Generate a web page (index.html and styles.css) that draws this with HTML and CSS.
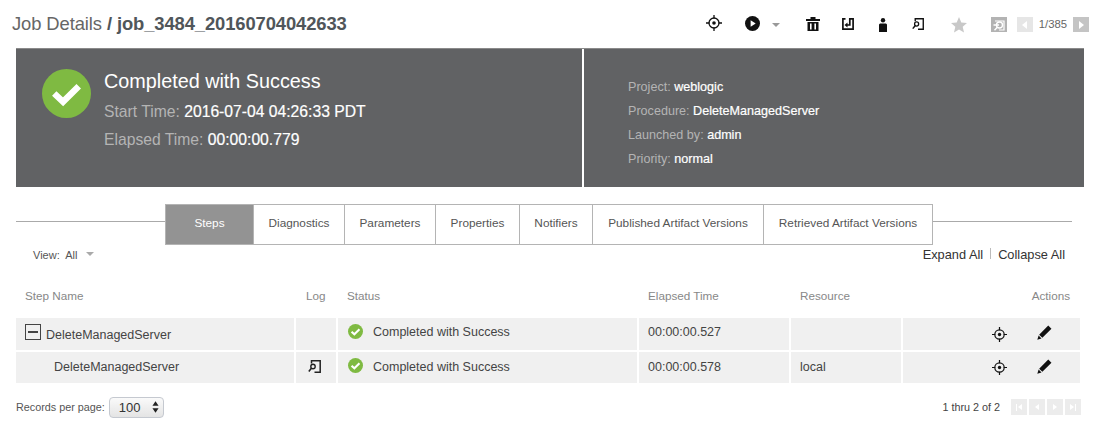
FILE: index.html
```html
<!DOCTYPE html>
<html lang="en">
<head>
<meta charset="utf-8">
<title>Job Details</title>
<link rel="stylesheet" href="styles.css">
</head>
<body>
<svg class="defs" width="0" height="0" aria-hidden="true">
  <defs>
    <symbol id="target" viewBox="0 0 16 16">
      <circle cx="8" cy="8" r="5" fill="none" stroke="currentColor" stroke-width="1.3"/>
      <circle cx="8" cy="8" r="1.8" fill="currentColor"/>
      <path d="M8 0v3.5M8 12.5V16M0 8h3.5M12.5 8H16" stroke="currentColor" stroke-width="1.3" fill="none"/>
    </symbol>
    <symbol id="logfile" viewBox="0 0 13 13">
      <path d="M3.500 3.500V.8h8.700v11.400H6.500" fill="none" stroke="currentColor" stroke-width="1.500"/>
      <circle cx="5" cy="6.500" r="2.200" fill="none" stroke="currentColor" stroke-width="1.400"/>
      <path d="M3.400 8.300.8 11.500" stroke="currentColor" stroke-width="1.600"/>
    </symbol>
    <symbol id="pencil" viewBox="0 0 14 14">
      <path d="M10.500.5 13.500 3.500 5 12 2 9zM1.500 9.800l2.700 2.700L.3 13.700z" fill="currentColor"/>
    </symbol>
    <symbol id="ok" viewBox="0 0 16 16">
      <circle cx="8" cy="8" r="8" fill="#7fba42"/>
      <path d="M3.800 8.200 6.800 11 12.200 5.600" fill="none" stroke="#fff" stroke-width="2.200"/>
    </symbol>
  </defs>
</svg>

<header class="topbar">
  <h1 class="title">Job Details <b>/ job_3484_20160704042633</b></h1>
  <div class="tools">
    <svg class="ic ic-target"><use href="#target"/></svg>
    <svg class="ic ic-play" viewBox="0 0 16 16"><circle cx="8" cy="8" r="8" fill="#111"/><path d="M6 4.600 11.400 8 6 11.400z" fill="#fff"/></svg>
    <span class="caret caret-top"></span>
    <svg class="ic ic-trash" viewBox="0 0 14 14"><path d="M4.500 0h5v2H14v2H0V2h4.500zM1.500 5h11v9h-11zM4 6.500V12.500h1.600V6.500zM8.400 6.500V12.500H10V6.500z" fill="#111" fill-rule="evenodd"/></svg>
    <svg class="ic ic-move" viewBox="0 0 12 12"><path d="M3.500.9H.9v10.200h10.200V.9H7.800V7H4.500" fill="none" stroke="#111" stroke-width="1.700"/><path d="M5.500 4.500v5L2.500 7z" fill="#111"/></svg>
    <svg class="ic ic-user" viewBox="0 0 8 14"><circle cx="4" cy="2.300" r="2.200" fill="#111"/><path d="M0 7c0-1 .8-1.500 1.500-1.500h5C7.200 5.500 8 6 8 7v7H0z" fill="#111"/></svg>
    <svg class="ic ic-log"><use href="#logfile"/></svg>
    <svg class="ic ic-star" viewBox="0 0 16 16"><path d="M8 0l2.300 5.400 5.700.5-4.300 3.800 1.300 5.800L8 12.500 3 15.500l1.300-5.800L0 5.900l5.700-.5z" fill="#c8c8c8"/></svg>
    <span class="sq sq-search"><svg viewBox="0 0 14 14"><path d="M3 3h9v9H7" fill="none" stroke="#fff" stroke-width="1.200"/><circle cx="7.500" cy="7" r="3" fill="#b3b3b3" stroke="#fff" stroke-width="1.400"/><path d="M5.300 9.300 2.500 12.300M1.500 7H7" stroke="#fff" stroke-width="1.400"/></svg></span>
    <span class="sq sq-off"><i class="tri-l"></i></span>
    <span class="count">1/385</span>
    <span class="sq sq-next"><i class="tri-r"></i></span>
  </div>
</header>

<section class="banner">
  <div class="banner-left">
    <svg class="big-ok" viewBox="0 0 50 50"><circle cx="25" cy="25" r="25" fill="#7fba42"/><path d="M12.500 25 21.500 33.500 37.500 17.500" fill="none" stroke="#fff" stroke-width="6.500"/></svg>
    <div class="summary">
      <h2>Completed with Success</h2>
      <p>Start Time: <b>2016-07-04 04:26:33 PDT</b></p>
      <p>Elapsed Time: <b>00:00:00.779</b></p>
    </div>
  </div>
  <div class="banner-right">
    <p>Project: <b>weblogic</b></p>
    <p>Procedure: <b>DeleteManagedServer</b></p>
    <p>Launched by: <b>admin</b></p>
    <p>Priority: <b>normal</b></p>
  </div>
</section>

<nav class="tabrow">
  <span class="rule rule-l"></span>
  <div class="tabs">
    <a class="tab active t1">Steps</a>
    <a class="tab t2">Diagnostics</a>
    <a class="tab t3">Parameters</a>
    <a class="tab t4">Properties</a>
    <a class="tab t5">Notifiers</a>
    <a class="tab t6">Published Artifact Versions</a>
    <a class="tab t7">Retrieved Artifact Versions</a>
  </div>
  <span class="rule rule-r"></span>
</nav>

<div class="viewrow">
  <div class="view">View:&nbsp; All <span class="caret caret-view"></span></div>
  <div class="expand">Expand All<span class="sep"></span>Collapse All</div>
</div>

<div class="table">
  <div class="row head">
    <div class="cell">Step Name</div>
    <div class="cell logh">Log</div>
    <div class="cell">Status</div>
    <div class="cell">Elapsed Time</div>
    <div class="cell">Resource</div>
    <div class="cell cell-actions-h">Actions</div>
  </div>
  <div class="row body r1">
    <div class="cell step"><span class="minus"></span>DeleteManagedServer</div>
    <div class="cell"></div>
    <div class="cell status"><svg class="ok"><use href="#ok"/></svg>Completed with Success</div>
    <div class="cell">00:00:00.527</div>
    <div class="cell"></div>
    <div class="cell actions"><svg class="a-target"><use href="#target"/></svg><svg class="a-pencil"><use href="#pencil"/></svg></div>
  </div>
  <div class="row body r2">
    <div class="cell step child">DeleteManagedServer</div>
    <div class="cell logcell"><svg class="a-log"><use href="#logfile"/></svg></div>
    <div class="cell status"><svg class="ok"><use href="#ok"/></svg>Completed with Success</div>
    <div class="cell">00:00:00.578</div>
    <div class="cell">local</div>
    <div class="cell actions"><svg class="a-target"><use href="#target"/></svg><svg class="a-pencil"><use href="#pencil"/></svg></div>
  </div>
</div>

<footer class="foot">
  <div class="perpage">Records per page:
    <span class="select">100<svg viewBox="0 0 8 13"><path d="M4 0l3.500 5h-7zM4 13 .5 8h7z" fill="#222"/></svg></span>
  </div>
  <div class="pager">
    <span class="range">1 thru 2 of 2</span>
    <span class="pg"><i class="bar"></i><i class="tri-l small"></i></span>
    <span class="pg"><i class="tri-l small"></i></span>
    <span class="pg"><i class="tri-r small"></i></span>
    <span class="pg"><i class="tri-r small"></i><i class="bar"></i></span>
  </div>
</footer>
</body>
</html>
```
FILE: styles.css
```css
* { box-sizing: border-box; }
html, body { margin: 0; padding: 0; }
body { width: 1100px; height: 433px; overflow: hidden; background: #fff; font-family: "Liberation Sans", Arial, sans-serif; color: #333; }
.defs { position: absolute; }
p, h1, h2 { margin: 0; font-weight: normal; }

.topbar { height: 48px; display: flex; justify-content: space-between; padding: 0 11px 0 12px; }
.title { font-size: 18.400px; line-height: 48px; color: #666; letter-spacing: -.1px; }
.title b { color: #50565a; }
.tools { display: flex; align-items: flex-start; padding-top: 15px; }
.ic { display: block; color: #111; flex: none; }
.ic-target { width: 16px; height: 16px; margin-right: 23px; }
.ic-play { width: 15px; height: 15px; margin: 1px 12px 0 0; }
.caret { display: block; width: 0; height: 0; border-style: solid; border-color: #999 transparent transparent; flex: none; }
.caret-top { border-width: 4px 4px 0; margin: 8px 26px 0 0; }
.ic-trash { width: 14px; height: 14px; margin: 2px 22px 0 0; }
.ic-move { width: 12px; height: 12px; margin: 3px 25px 0 0; }
.ic-user { width: 8px; height: 14px; margin: 3px 25px 0 0; }
.ic-log { width: 12px; height: 12px; margin: 3px 27px 0 0; }
.ic-star { width: 16px; height: 16px; margin: 2px 24px 0 0; }
.sq { display: flex; align-items: center; justify-content: center; width: 16px; height: 15px; flex: none; margin-top: 2px; }
.sq svg { width: 14px; height: 14px; }
.sq-search { background: #b3b3b3; margin-right: 10px; }
.sq-off { background: #e6e6e6; }
.sq-next { background: #c4c4c4; }
.count { font-size: 11.300px; line-height: 19px; color: #666; margin: 0 6px; }
.tri-l, .tri-r { display: block; width: 0; height: 0; border-style: solid; border-color: transparent; }
.tri-l { border-width: 4px 5px 4px 0; border-right-color: #fff; }
.tri-r { border-width: 4px 0 4px 5px; border-left-color: #fff; }

.banner { margin: 0 16px; height: 139px; background: #616264; display: flex; color: #fff; border-top: 1px solid #8a8a8a; }
.banner-left { width: 568px; display: flex; padding: 20px 0 0 26px; border-right: 2px solid #fff; }
.big-ok { width: 49px; height: 49px; flex: none; margin-right: 13px; }
.summary h2 { font-size: 19.800px; line-height: 24px; }
.summary p { font-size: 15.700px; line-height: 28px; color: #b4b4b4; margin-top: 5px; }
.summary p + p { margin-top: 0; }
.summary b, .banner-right b { font-weight: normal; color: #fff; -webkit-text-stroke: .2px #fff; }
.banner-right { padding: 25.500px 0 0 44px; font-size: 12.600px; color: #b4b4b4; }
.banner-right p { line-height: 24.300px; }

.tabrow { display: flex; margin: 17px 28px 0 16px; height: 41px; }
.rule { display: block; height: 1px; background: #aaa; margin-top: 17px; }
.rule-l { width: 149px; }
.rule-r { flex: 1; }
.tabs { display: flex; height: 41px; border: 1px solid #b4b4b4; border-right-width: 0; font-size: 11.800px; }
.tab { display: flex; align-items: center; justify-content: center; border-right: 1px solid #b4b4b4; color: #555; padding-bottom: 3px; }
.tab.active { background: #939393; color: #fff; }
.t1 { width: 88px; } .t2 { width: 91px; } .t3 { width: 91px; } .t4 { width: 84px; } .t5 { width: 73px; } .t6 { width: 171px; } .t7 { width: 169px; }

.viewrow { display: flex; justify-content: space-between; margin: 0 35px 0 33px; height: 32px; padding-top: 2px; }
.view { font-size: 11px; line-height: 17px; color: #555; display: flex; align-items: center; height: 16px; white-space: pre; }
.caret-view { border-width: 4px 4px 0; margin-left: 5px; margin-top: -2px; border-top-color: #aaa; }
.expand { font-size: 12.800px; line-height: 15px; color: #333; white-space: pre; }
.sep { display: inline-block; width: 1px; height: 11px; background: #bbb; margin: 0 7px; }

.table { margin: 0 20px 0 16px; }
.row { display: grid; grid-template-columns: 278px 40px 299px 150px 110px 177px; column-gap: 2px; font-size: 12.500px; }
.cell { display: flex; align-items: center; background: transparent; padding-left: 9px; white-space: nowrap; }
.head { height: 41px; padding-bottom: 5px; font-size: 11.700px; color: #888; }
.logh { padding-left: 10px; }
.cell-actions-h { justify-content: flex-end; padding-right: 10px; }
.body { margin-bottom: 2px; color: #444; }
.body .cell { background: #f0f0f0; }
.r1 { height: 32px; }
.r2 { height: 31px; }
.r1 .cell { padding-bottom: 4px; }
.r1 .step { padding-bottom: 0; padding-top: 2px; }
.r2 .cell { padding-bottom: 2px; }
.row .status { padding-left: 10px; }
.child { padding-left: 38px; }
.minus { display: block; width: 16px; height: 16px; border: 1.500px solid #444; margin: -6px 5px 0 0; background: linear-gradient(#444, #444) center / 10px 2px no-repeat; flex: none; }
.status svg.ok { width: 15px; height: 15px; margin: -2px 10px 0 0; flex: none; }
.row .logcell { justify-content: center; padding-left: 0; padding-right: 3px; }
.a-log { width: 13px; height: 13px; color: #222; }
.row .actions { justify-content: flex-end; padding-right: 28px; padding-bottom: 0; }
.a-target { width: 15px; height: 15px; color: #111; margin-right: 30px; }
.a-pencil { width: 15px; height: 15px; color: #111; margin-top: -3px; }

.foot { display: flex; justify-content: space-between; margin: 13px 19px 0 16px; align-items: center; height: 22px; }
.perpage { display: flex; align-items: center; font-size: 10.800px; color: #555; gap: 4px; }
.select { display: flex; align-items: center; justify-content: space-between; width: 55px; height: 21px; padding: 0 4px 0 9px; border: 1.500px solid #c5c9d0; border-radius: 4px; background: linear-gradient(#fafafa, #e4e4e4); font-size: 13px; color: #333; }
.select svg { width: 7px; height: 12px; }
.pager { display: flex; align-items: center; gap: 2px; }
.range { font-size: 10.800px; color: #444; margin-right: 9px; }
.pg { display: flex; align-items: center; justify-content: center; width: 16px; height: 16px; background: #ececec; gap: 1px; }
.tri-l.small { border-width: 3.500px 4.500px 3.500px 0; }
.tri-r.small { border-width: 3.500px 0 3.500px 4.500px; }
.bar { display: block; width: 1.500px; height: 7px; background: #fff; }
```
